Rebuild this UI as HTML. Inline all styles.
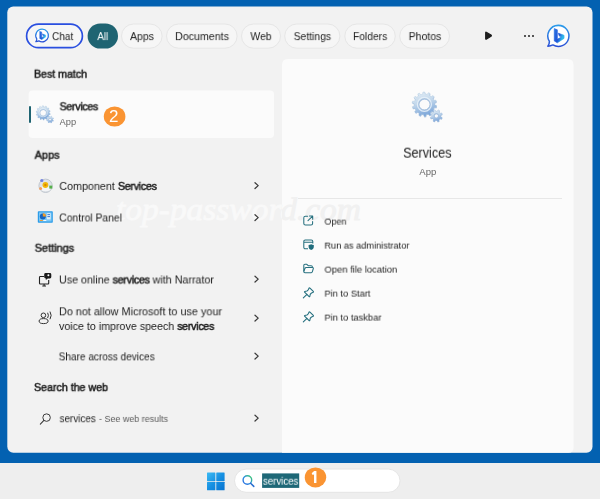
<!DOCTYPE html>
<html><head><meta charset="utf-8">
<style>
*{box-sizing:border-box;margin:0;padding:0}
html,body{width:600px;height:499px;overflow:hidden}
body{background:#0361b1;font-family:"Liberation Sans",sans-serif;position:relative;color:#1b1b1b}
.abs{position:absolute}
#panel{left:7.5px;top:6.5px;width:585px;height:446px;background:#f2f2f2;border-radius:5px}
#card{left:282px;top:58.5px;width:291.5px;height:394px;background:#fbfbfb;border-radius:6px 6px 5px 0}
#task{left:0;top:463px;width:600px;height:36px;background:#eeeeee}
.pill{height:25px;border-radius:13px;border:1px solid #e2e2e2;background:#f9f9f9;top:23.5px}
.t{white-space:nowrap;transform-origin:0 50%;will-change:transform}
.t b{font-weight:normal;-webkit-text-stroke:0.5px #1b1b1b;letter-spacing:-0.3px}
.t b.h{letter-spacing:0}
.chev{width:5.5px;height:5.5px;border-right:1.3px solid #3a3a3a;border-top:1.3px solid #3a3a3a;transform:rotate(45deg)}
.num{color:#fff;font-size:17px;line-height:20px;will-change:transform}
svg{position:absolute;overflow:visible}
</style></head><body>
<div id="task" class="abs"></div>
<svg style="left:0;top:0" width="600" height="499" viewBox="0 0 600 499"><defs>
<linearGradient id="gg" x1="0" y1="0" x2="0.3" y2="1"><stop offset="0" stop-color="#e6eff6"/><stop offset="0.5" stop-color="#c3d8ec"/><stop offset="1" stop-color="#7fa8da"/></linearGradient>
<linearGradient id="bg" x1="0" y1="0" x2="0" y2="1"><stop offset="0" stop-color="#2b9bea"/><stop offset="1" stop-color="#2a50d6"/></linearGradient>
<linearGradient id="bb" x1="0" y1="0.2" x2="1" y2="0.7"><stop offset="0" stop-color="#2a6fe0"/><stop offset="0.5" stop-color="#1f55d8"/><stop offset="0.85" stop-color="#2fb8ea"/></linearGradient>
<g id="gears">
<path d="M22.69 13.81 L24.63 14.58 L24.31 16.37 L22.22 16.40 L21.45 18.23 L22.87 19.76 L21.80 21.23 L19.90 20.36 L18.41 21.66 L19.03 23.66 L17.43 24.52 L16.10 22.91 L14.19 23.44 L13.88 25.51 L12.06 25.60 L11.56 23.57 L9.61 23.21 L8.43 24.94 L6.76 24.23 L7.19 22.19 L5.58 21.02 L3.78 22.07 L2.58 20.70 L3.85 19.05 L2.91 17.30 L0.82 17.46 L0.34 15.71 L2.21 14.77 L2.11 12.79 L0.17 12.02 L0.49 10.23 L2.58 10.20 L3.35 8.37 L1.93 6.84 L3.00 5.37 L4.90 6.24 L6.39 4.94 L5.77 2.94 L7.37 2.08 L8.70 3.69 L10.61 3.16 L10.92 1.09 L12.74 1.00 L13.24 3.03 L15.19 3.39 L16.37 1.66 L18.04 2.37 L17.61 4.41 L19.22 5.58 L21.02 4.53 L22.22 5.90 L20.95 7.55 L21.89 9.30 L23.98 9.14 L24.46 10.89 L22.59 11.83Z M18.00 13.30 A5.6 5.6 0 1 0 6.80 13.30 A5.6 5.6 0 1 0 18.00 13.30Z" fill="#6b95cc" opacity="0.55" transform="translate(0.3 0.8)" fill-rule="evenodd"/>
<path d="M22.69 13.81 L24.63 14.58 L24.31 16.37 L22.22 16.40 L21.45 18.23 L22.87 19.76 L21.80 21.23 L19.90 20.36 L18.41 21.66 L19.03 23.66 L17.43 24.52 L16.10 22.91 L14.19 23.44 L13.88 25.51 L12.06 25.60 L11.56 23.57 L9.61 23.21 L8.43 24.94 L6.76 24.23 L7.19 22.19 L5.58 21.02 L3.78 22.07 L2.58 20.70 L3.85 19.05 L2.91 17.30 L0.82 17.46 L0.34 15.71 L2.21 14.77 L2.11 12.79 L0.17 12.02 L0.49 10.23 L2.58 10.20 L3.35 8.37 L1.93 6.84 L3.00 5.37 L4.90 6.24 L6.39 4.94 L5.77 2.94 L7.37 2.08 L8.70 3.69 L10.61 3.16 L10.92 1.09 L12.74 1.00 L13.24 3.03 L15.19 3.39 L16.37 1.66 L18.04 2.37 L17.61 4.41 L19.22 5.58 L21.02 4.53 L22.22 5.90 L20.95 7.55 L21.89 9.30 L23.98 9.14 L24.46 10.89 L22.59 11.83Z M18.00 13.30 A5.6 5.6 0 1 0 6.80 13.30 A5.6 5.6 0 1 0 18.00 13.30Z" fill="url(#gg)" stroke="#a9c4de" stroke-width="0.4" fill-rule="evenodd"/>
<circle cx="12.4" cy="13.3" r="7" fill="none" stroke="#e6f0f8" stroke-width="1.3" opacity="0.9"/>
<circle cx="12.4" cy="13.3" r="5.6" fill="none" stroke="#9db9d8" stroke-width="0.6"/>
<path d="M28.81 25.71 L30.23 26.60 L29.57 28.06 L27.97 27.58 L26.84 28.63 L27.22 30.27 L25.73 30.83 L24.93 29.36 L23.39 29.31 L22.50 30.73 L21.04 30.07 L21.52 28.47 L20.47 27.34 L18.83 27.72 L18.27 26.23 L19.74 25.43 L19.79 23.89 L18.37 23.00 L19.03 21.54 L20.63 22.02 L21.76 20.97 L21.38 19.33 L22.87 18.77 L23.67 20.24 L25.21 20.29 L26.10 18.87 L27.56 19.53 L27.08 21.13 L28.13 22.26 L29.77 21.88 L30.33 23.37 L28.86 24.17Z M26.50 24.80 A2.2 2.2 0 1 0 22.10 24.80 A2.2 2.2 0 1 0 26.50 24.80Z" fill="#6b95cc" opacity="0.55" transform="translate(0.2 0.6)" fill-rule="evenodd"/>
<path d="M28.81 25.71 L30.23 26.60 L29.57 28.06 L27.97 27.58 L26.84 28.63 L27.22 30.27 L25.73 30.83 L24.93 29.36 L23.39 29.31 L22.50 30.73 L21.04 30.07 L21.52 28.47 L20.47 27.34 L18.83 27.72 L18.27 26.23 L19.74 25.43 L19.79 23.89 L18.37 23.00 L19.03 21.54 L20.63 22.02 L21.76 20.97 L21.38 19.33 L22.87 18.77 L23.67 20.24 L25.21 20.29 L26.10 18.87 L27.56 19.53 L27.08 21.13 L28.13 22.26 L29.77 21.88 L30.33 23.37 L28.86 24.17Z M26.50 24.80 A2.2 2.2 0 1 0 22.10 24.80 A2.2 2.2 0 1 0 26.50 24.80Z" fill="url(#gg)" stroke="#9fbcdc" stroke-width="0.4" fill-rule="evenodd"/>
<circle cx="24.3" cy="24.8" r="2.2" fill="none" stroke="#9db9d8" stroke-width="0.5"/>
</g>
<g id="bing">
<path d="M11.6 0.8 A11 11 0 1 1 6.2 21.2 Q3.6 22.4 0.9 22.6 Q2.6 20 2.5 17.6 A11 11 0 0 1 11.6 0.8Z" fill="#fff" stroke="url(#bg)" stroke-width="1.6" stroke-linejoin="round"/>
<path d="M7.6 4.2 L10.8 5.4 V15.4 L15 13 L12.9 12 L11.8 9 L17.8 11.2 V14.4 L10.8 19 L7.6 17Z" fill="url(#bb)" stroke="url(#bb)" stroke-width="0.7" stroke-linejoin="round"/>
</g>
</defs>
<g transform="translate(0 0)">
<rect x="7.3" y="6.6" width="585.2" height="446.1" rx="6" fill="#f2f2f2"/>
<path d="M282 452.7 V65 Q282 59 288 59 H567.5 Q573.5 59 573.5 65 V447.7 Q573.5 452.7 568.5 452.7Z" fill="#fbfbfb"/>
<rect x="28.6" y="90.6" width="245.4" height="47.4" rx="4" fill="#fbfbfb"/>
</g>
<g transform="translate(0 0)">
<defs><clipPath id="cl"><rect x="0" y="150" width="282" height="120"/></clipPath><clipPath id="cr"><rect x="282" y="150" width="300" height="120"/></clipPath></defs>
<g font-family="'Liberation Serif',serif" font-style="italic" font-size="32" stroke-width="0.9" stroke-linejoin="round">
<text x="116" y="220" textLength="245" lengthAdjust="spacingAndGlyphs" fill="#f9f9f9" stroke="#f9f9f9" clip-path="url(#cl)">top-password.com</text>
<text x="116" y="220" textLength="245" lengthAdjust="spacingAndGlyphs" fill="#f1f1f1" stroke="#f1f1f1" clip-path="url(#cr)">top-password.com</text>
</g></g>
<g transform="translate(0 0)"><rect x="26.6" y="24.1" width="55.8" height="23.6" rx="11.8" fill="#f6f6f6" stroke="#2a4fe0" stroke-width="1.7"/><rect x="87.6" y="23.4" width="30.4" height="25.2" rx="12.6" fill="#1f6472"/><rect x="121.5" y="24" width="40.6" height="24.2" rx="12.1" fill="#f6f6f6" stroke="#e6e6e6" stroke-width="1"/><rect x="166.5" y="24" width="70.6" height="24.2" rx="12.1" fill="#f6f6f6" stroke="#e6e6e6" stroke-width="1"/><rect x="241.5" y="24" width="39.0" height="24.2" rx="12.1" fill="#f6f6f6" stroke="#e6e6e6" stroke-width="1"/><rect x="284.7" y="24" width="55.2" height="24.2" rx="12.1" fill="#f6f6f6" stroke="#e6e6e6" stroke-width="1"/><rect x="344.8" y="24" width="50.5" height="24.2" rx="12.1" fill="#f6f6f6" stroke="#e6e6e6" stroke-width="1"/><rect x="399.7" y="24" width="49.8" height="24.2" rx="12.1" fill="#f6f6f6" stroke="#e6e6e6" stroke-width="1"/></g>
<g transform="translate(35.1 28.45) scale(0.59574 0.59574)">
<path d="M11.6 1.2 A10.6 10.6 0 1 1 6.4 20.9 Q3.8 22 1.3 22.2 Q2.9 19.8 2.8 17.6 A10.6 10.6 0 0 1 11.6 1.2Z" fill="#fff" stroke="url(#bg)" stroke-width="2.1" stroke-linejoin="round"/>
<path d="M7.6 4.6 L11.2 5.8 V15 L14.8 12.9 L13 12 L11.9 9 L17.8 11.2 V14.4 L11.2 18.8 L7.6 16.8Z" fill="url(#bb)" stroke="url(#bb)" stroke-width="0.5" stroke-linejoin="round"/>
</g>
<g transform="translate(547 24.6) scale(0.95745 0.95745)"><use href="#bing"/></g>
<g transform="translate(484.8 31)"><path d="M1.4 1.2 L6.2 4.1 Q7 4.7 6.2 5.3 L1.4 8.2 Q0.9 8.4 0.9 7.7 V1.7 Q0.9 1 1.4 1.2Z" fill="#1e1e1e" stroke="#1e1e1e" stroke-width="1.2" stroke-linejoin="round"/></g>
<g transform="translate(36 105) scale(0.57812 0.57812)"><use href="#gears"/></g>
<g transform="translate(412 91)"><use href="#gears"/></g>
<g transform="translate(37 177)">
<circle cx="8.6" cy="8.8" r="6.7" fill="#e0e3e7" stroke="#bcc3cc" stroke-width="0.9"/>
<ellipse cx="8.6" cy="11.5" rx="5" ry="2.6" fill="#f4f5f7"/>
<circle cx="8.4" cy="8" r="2.9" fill="#f2b90c"/>
<circle cx="8.4" cy="8" r="1.2" fill="#d98a00"/>
<circle cx="4.8" cy="3.5" r="1.6" fill="#6f7fe0"/>
<rect x="12.3" y="8.6" width="3" height="3" fill="#55b04a"/>
<circle cx="3.6" cy="11.6" r="1.5" fill="#f0a060"/>
</g>
<g transform="translate(37.8 211.2)">
<rect x="0" y="0" width="15" height="11.5" rx="0.8" fill="#2b9ce9"/>
<rect x="1.2" y="1.2" width="12.6" height="9.1" fill="#7cc7f5"/>
<circle cx="5" cy="5.3" r="3" fill="#1565c0"/>
<path d="M5 5.3 L5 2 A3.3 3.3 0 0 1 8.2 5.3Z" fill="#f59a23"/>
<rect x="9" y="2" width="3.8" height="6.2" fill="#dff0fb"/>
<rect x="9.6" y="3" width="2.6" height="0.9" fill="#2b6fd0"/>
<rect x="9.6" y="5" width="2.6" height="0.9" fill="#2b6fd0"/>
<rect x="2" y="8.8" width="3" height="0.9" fill="#f59a23"/>
<rect x="5.5" y="8.8" width="3" height="0.9" fill="#fff"/>
</g>
<g transform="translate(38 272)">
<path d="M6 4.5 H2.2 Q1.5 4.5 1.5 5.2 V11.3 Q1.5 12 2.2 12 H10 Q10.7 12 10.7 11.3 V8" fill="none" stroke="#222" stroke-width="1.1"/>
<path d="M4.3 14 H8 M6.1 12 V14" stroke="#222" stroke-width="1.1" fill="none"/>
<path d="M7.6 1 H11.9 Q13.3 1 13.3 2.4 V5 Q13.3 6.4 11.9 6.4 H9.8 L7.8 8 V6.4 Q6.2 6.3 6.2 5 V2.4 Q6.2 1 7.6 1Z" fill="#1b1b1b"/>
<circle cx="10.4" cy="3.3" r="1" fill="#fff"/>
</g>
<g transform="translate(38 309.5)">
<circle cx="5.4" cy="5.8" r="2.3" fill="none" stroke="#333" stroke-width="1"/>
<ellipse cx="5.6" cy="11.6" rx="4.5" ry="2.5" fill="none" stroke="#333" stroke-width="1"/>
<path d="M9.8 3.6 Q11.2 5.9 9.8 8.2 M12.2 2.4 Q14.3 5.9 12.2 9.4" fill="none" stroke="#333" stroke-width="1" stroke-linecap="round"/>
</g>
<g transform="translate(39.3 412.6) scale(1.0417 1.0417)">
<circle cx="7" cy="4.8" r="3.6" fill="none" stroke="#3a3a3a" stroke-width="0.95"/>
<path d="M4.4 7.5 L1 11" stroke="#3a3a3a" stroke-width="1.05" stroke-linecap="round"/>
</g>
<g transform="translate(254.2 182)"><path d="M0.8 0.7 L4 3.6 L0.8 6.5" fill="none" stroke="#3a3a3a" stroke-width="1.25" stroke-linecap="round" stroke-linejoin="round"/></g>
<g transform="translate(254.2 214)"><path d="M0.8 0.7 L4 3.6 L0.8 6.5" fill="none" stroke="#3a3a3a" stroke-width="1.25" stroke-linecap="round" stroke-linejoin="round"/></g>
<g transform="translate(254.2 275.5)"><path d="M0.8 0.7 L4 3.6 L0.8 6.5" fill="none" stroke="#3a3a3a" stroke-width="1.25" stroke-linecap="round" stroke-linejoin="round"/></g>
<g transform="translate(254.2 314.5)"><path d="M0.8 0.7 L4 3.6 L0.8 6.5" fill="none" stroke="#3a3a3a" stroke-width="1.25" stroke-linecap="round" stroke-linejoin="round"/></g>
<g transform="translate(254.2 352.5)"><path d="M0.8 0.7 L4 3.6 L0.8 6.5" fill="none" stroke="#3a3a3a" stroke-width="1.25" stroke-linecap="round" stroke-linejoin="round"/></g>
<g transform="translate(254.2 414.5)"><path d="M0.8 0.7 L4 3.6 L0.8 6.5" fill="none" stroke="#3a3a3a" stroke-width="1.25" stroke-linecap="round" stroke-linejoin="round"/></g>
<g transform="translate(303 215)" fill="none" stroke="#26707f" stroke-width="1.05" stroke-linecap="round" stroke-linejoin="round">
<path d="M4.6 1.2 H2.4 Q0.8 1.2 0.8 2.8 V8.4 Q0.8 10 2.4 10 H8 Q9.6 10 9.6 8.4 V6.4"/><path d="M6.5 1 H9.7 V4.2 M9.7 1 L5 5.7"/></g>
<g transform="translate(303 239)" fill="none" stroke="#26707f" stroke-width="1.05" stroke-linejoin="round">
<path d="M5 9.8 H2.3 Q0.8 9.8 0.8 8.3 V2.5 Q0.8 1 2.3 1 H8.3 Q9.8 1 9.8 2.5 V4.6 M0.8 3.2 H9.8"/>
<path d="M8.2 5.2 Q9.4 6 10.8 6 V8.2 Q10.6 10.2 8.2 11 Q5.8 10.2 5.6 8.2 V6 Q7 6 8.2 5.2Z" fill="#1f6c7c" stroke="none"/></g>
<g transform="translate(303 263.5)" fill="none" stroke="#26707f" stroke-width="1.05" stroke-linejoin="round">
<path d="M0.8 7.8 V2 Q0.8 0.8 2 0.8 H3.8 L5.2 2.2 H8.2 Q9.4 2.2 9.4 3.4 V4"/><path d="M0.8 8 L2 4.8 Q2.3 4 3.2 4 H9.6 Q10.6 4 10.3 5 L9.4 8.2 Q9.1 9.2 8.2 9.2 H2 Q0.8 9.2 0.8 8Z"/></g>
<g transform="translate(302.6 287.2) scale(1.0364 1.0364)" fill="none" stroke="#26707f" stroke-width="1.05" stroke-linejoin="round" stroke-linecap="round">
<path d="M6.3 0.8 Q6.7 0.5 7.1 0.9 L10.3 4.1 Q10.7 4.6 10.2 4.9 L8.7 5.5 L7.4 6.8 L6.9 9 Q6.7 9.5 6.3 9.1 L1.9 4.7 Q1.6 4.3 2.1 4.1 L4.2 3.7 L5.6 2.3Z"/><path d="M4.2 6.9 L0.7 10.4"/></g>
<g transform="translate(302.6 311.2) scale(1.0364 1.0364)" fill="none" stroke="#26707f" stroke-width="1.05" stroke-linejoin="round" stroke-linecap="round">
<path d="M6.3 0.8 Q6.7 0.5 7.1 0.9 L10.3 4.1 Q10.7 4.6 10.2 4.9 L8.7 5.5 L7.4 6.8 L6.9 9 Q6.7 9.5 6.3 9.1 L1.9 4.7 Q1.6 4.3 2.1 4.1 L4.2 3.7 L5.6 2.3Z"/><path d="M4.2 6.9 L0.7 10.4"/></g>
<g transform="translate(207 472.6)">
<defs><linearGradient id="wg" gradientUnits="userSpaceOnUse" x1="0" y1="0" x2="17.6" y2="17.6"><stop offset="0" stop-color="#3cbaf3"/><stop offset="0.5" stop-color="#1690e2"/><stop offset="1" stop-color="#0873d0"/></linearGradient></defs>
<rect x="0" y="0" width="8.35" height="8.35" rx="0.5" fill="url(#wg)"/><rect x="9.25" y="0" width="8.35" height="8.35" rx="0.5" fill="url(#wg)"/><rect x="0" y="9.25" width="8.35" height="8.35" rx="0.5" fill="url(#wg)"/><rect x="9.25" y="9.25" width="8.35" height="8.35" rx="0.5" fill="url(#wg)"/></g>
<g transform="translate(230 465)"><rect x="4.5" y="4.1" width="165.5" height="23.2" rx="11.6" fill="#fff" stroke="#e2e2e2" stroke-width="0.9"/></g>
<g transform="translate(241.8 474.4)"><defs><linearGradient id="sg" x1="0.1" y1="0.9" x2="0.9" y2="0.1"><stop offset="0" stop-color="#2a72e0"/><stop offset="0.5" stop-color="#2a8fe0"/><stop offset="1" stop-color="#3cc47a"/></linearGradient></defs>
<circle cx="5.6" cy="5.6" r="4.3" fill="none" stroke="url(#sg)" stroke-width="1.4"/><path d="M8.8 8.8 L12 12" stroke="#2a6fd0" stroke-width="1.5" stroke-linecap="round"/></g>
<g transform="translate(262 473)"><rect x="0.1" y="0.4" width="37.1" height="14.5" fill="#1e6877"/></g>
<g transform="translate(300 462)"><ellipse cx="15.5" cy="15.4" rx="10.75" ry="10" fill="#fa9432"/></g>
<g transform="translate(100 100)"><ellipse cx="14.6" cy="16.5" rx="10.8" ry="10.1" fill="#fa9432"/></g>
</svg>
<!-- pills -->
<!-- play + dots -->
<div class="abs" style="left:523.5px;top:35px;width:2px;height:2px;background:#222;border-radius:1px;box-shadow:4px 0 0 #222,8px 0 0 #222"></div>
<!-- best match card -->
<div class="abs" style="left:29px;top:105.5px;width:2.2px;height:17px;background:#1f6472;border-radius:2px"></div>
<!-- component services icon -->
<!-- control panel icon -->
<!-- narrator icon -->
<!-- speech icon -->
<!-- web search icon -->
<!-- right card -->
<div class="abs" style="left:298px;top:198px;width:264px;height:1px;background:#e7e7e7"></div>
<!-- action icons -->
<g></g>
<!-- taskbar -->
<div class="abs num" style="left:309.5px;top:467.9px;font-family:NanumGothic,'Liberation Sans',sans-serif;font-weight:bold;font-size:16px;text-shadow:0.35px 0 0 #fff,-0.35px 0 0 #fff">1</div>
<div class="abs num" style="left:109.3px;top:107.1px">2</div>
<div id="bm" class="abs t" style="left:34px;top:66px;font-size:11px;line-height:15px;transform:translate(0.00px,0.69px) scaleX(0.9631);"><b class="h">Best match</b></div>
<div id="sv" class="abs t" style="left:59px;top:99px;font-size:11px;line-height:15px;transform:translate(0.60px,0.29px) scaleX(0.9653);"><b>Services</b></div>
<div id="ap" class="abs t" style="left:59px;top:115px;font-size:9px;line-height:13px;transform:translate(0.50px,0.78px) scaleX(1.0365);color:#666">App</div>
<div id="apps" class="abs t" style="left:34px;top:147px;font-size:11px;line-height:15px;transform:translate(0.60px,0.69px) scaleX(0.9969);"><b class="h">Apps</b></div>
<div id="cs" class="abs t" style="left:59px;top:178px;font-size:11px;line-height:15px;transform:translate(0.30px,0.89px) scaleX(0.9767);">Component <b>Services</b></div>
<div id="cp" class="abs t" style="left:59px;top:210px;font-size:11px;line-height:15px;transform:translate(0.20px,0.49px) scaleX(0.9421);">Control Panel</div>
<div id="set" class="abs t" style="left:34px;top:240px;font-size:11px;line-height:15px;transform:translate(0.70px,0.69px) scaleX(0.9912);"><b class="h">Settings</b></div>
<div id="uo" class="abs t" style="left:59px;top:272px;font-size:11px;line-height:15px;transform:translate(0.00px,0.49px) scaleX(0.9747);">Use online <b>services</b> with Narrator</div>
<div id="dn" class="abs t" style="left:59px;top:304px;font-size:11px;line-height:15px;transform:translate(0.00px,0.29px) scaleX(0.9838);">Do not allow Microsoft to use your</div>
<div id="vo" class="abs t" style="left:59px;top:318px;font-size:11px;line-height:15px;transform:translate(0.00px,0.99px) scaleX(0.9710);">voice to improve speech <b>services</b></div>
<div id="sh" class="abs t" style="left:58px;top:349px;font-size:11px;line-height:15px;transform:translate(0.70px,0.34px) scaleX(0.9128);">Share across devices</div>
<div id="sw" class="abs t" style="left:34px;top:380px;font-size:11px;line-height:15px;transform:translate(0.00px,0.09px) scaleX(0.9681);"><b class="h">Search the web</b></div>
<div id="ws" class="abs t" style="left:59px;top:411px;font-size:11px;line-height:15px;transform:translate(0.60px,0.19px) scaleX(0.8973);">services</div>
<div id="ws2" class="abs t" style="left:99px;top:412px;font-size:9px;line-height:13px;transform:translate(0.00px,0.88px) scaleX(0.9924);color:#5a5a5a">- See web results</div>
<div id="S2" class="abs t" style="left:403px;top:142px;font-size:14px;line-height:20px;transform:translate(0.20px,0.65px) scaleX(0.8978);">Services</div>
<div id="A2" class="abs t" style="left:419px;top:165px;font-size:9.2px;line-height:13px;transform:translate(0.30px,0.51px) scaleX(1.0392);color:#666">App</div>
<div id="o1" class="abs t" style="left:324px;top:214px;font-size:9.5px;line-height:13px;transform:translate(0.40px,0.61px) scaleX(0.9462);">Open</div>
<div id="o2" class="abs t" style="left:324px;top:238px;font-size:9.5px;line-height:13px;transform:translate(0.40px,0.61px) scaleX(0.9697);">Run as administrator</div>
<div id="o3" class="abs t" style="left:324px;top:262px;font-size:9.5px;line-height:13px;transform:translate(0.40px,0.61px) scaleX(0.9943);">Open file location</div>
<div id="o4" class="abs t" style="left:324px;top:286px;font-size:9.5px;line-height:13px;transform:translate(0.40px,0.61px) scaleX(0.9787);">Pin to Start</div>
<div id="o5" class="abs t" style="left:324px;top:310px;font-size:9.5px;line-height:13px;transform:translate(0.40px,0.61px) scaleX(0.9812);">Pin to taskbar</div>
<div id="q" class="abs t" style="left:263px;top:473px;font-size:11px;line-height:15px;transform:translate(0.00px,0.69px) scaleX(0.8775);color:#fff">services</div>
<div id="p0" class="abs t" style="left:52px;top:29px;font-size:11px;line-height:15px;transform:translate(0.00px,0.09px) scaleX(0.9161);">Chat</div>
<div id="p1" class="abs t" style="left:97px;top:29px;font-size:11px;line-height:15px;transform:translate(0.30px,0.09px) scaleX(0.8991);color:#fff">All</div>
<div id="p2" class="abs t" style="left:130px;top:29px;font-size:11px;line-height:15px;transform:translate(0.00px,0.09px) scaleX(0.9570);">Apps</div>
<div id="p3" class="abs t" style="left:175px;top:29px;font-size:11px;line-height:15px;transform:translate(0.10px,0.09px) scaleX(0.9669);">Documents</div>
<div id="p4" class="abs t" style="left:250px;top:29px;font-size:11px;line-height:15px;transform:translate(0.40px,0.09px) scaleX(0.9455);">Web</div>
<div id="p5" class="abs t" style="left:293px;top:29px;font-size:11px;line-height:15px;transform:translate(0.70px,0.09px) scaleX(0.9384);">Settings</div>
<div id="p6" class="abs t" style="left:353px;top:29px;font-size:11px;line-height:15px;transform:translate(0.00px,0.09px) scaleX(0.9322);">Folders</div>
<div id="p7" class="abs t" style="left:408px;top:29px;font-size:11px;line-height:15px;transform:translate(0.70px,0.09px) scaleX(0.9518);">Photos</div>
</body></html>
